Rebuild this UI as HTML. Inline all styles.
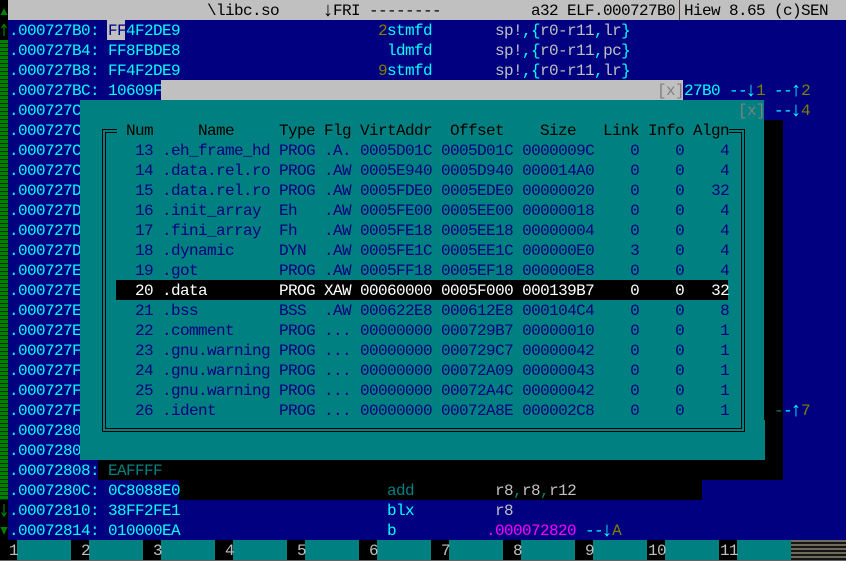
<!DOCTYPE html>
<html><head><meta charset="utf-8">
<style>
html,body{margin:0;padding:0;background:#000080;width:846px;height:561px;overflow:hidden}
#s{position:relative;width:846px;height:561px;overflow:hidden;background:#000080;font-family:"Liberation Mono",monospace;font-size:16px;letter-spacing:-.6px;color:#0ff}
.r{position:absolute}
pre{position:absolute;margin:0 0 0 1px;font:inherit;letter-spacing:inherit;line-height:22px;height:20px;white-space:pre}
.g{color:#c0c0c0}.o{color:#808000}.k{color:#000}.n{color:#000080}.t{color:#008080}.w{color:#fff}.m{color:#f0f}.d{color:#808080}
.a{font-size:20px;letter-spacing:-3px;line-height:0;position:relative;left:-2px;top:1px}
</style></head><body><div id="s">
<div class="r" style="left:0;top:0;width:8px;height:540px;background:#000"></div>
<div class="r" style="left:0;top:40px;width:8px;height:460px;background:repeating-linear-gradient(#008000 0 3px,#003000 3px 4px)"></div>
<svg class="r" style="left:0;top:0" width="8" height="40"><path d="M4 8L7.5 15H.5Z" fill="#008000"/><path d="M4 24V36M1.5 28L4 24.500L6.500 28" fill="none" stroke="#008000" stroke-width="1.200"/></svg>
<svg class="r" style="left:0;top:500px" width="8" height="40"><path d="M4 4V16M1.500 12.500L4 16L6.500 12.500" fill="none" stroke="#008000" stroke-width="1.200"/><path d="M.5 27H7.500L4 35Z" fill="#008000"/></svg>
<div class="r" style="left:8px;top:0;width:838px;height:20px;background:#c0c0c0"></div>
<div class="r" style="left:679px;top:0;width:1px;height:20px;background:#503030"></div>
<pre class="k" style="left:206px;top:0">\libc.so</pre>
<pre class="k" style="left:323px;top:0"><span class="a">↓</span>FRI --------</pre>
<pre class="k" style="left:530px;top:0">a32 ELF.000727B0</pre>
<pre class="k" style="left:683px;top:0">Hiew 8.65 (c)SEN</pre>

<div class="r" style="left:107px;top:20px;width:18px;height:20px;background:#c0c0c0"></div>
<pre style="left:8px;top:20px">.000727B0: <span class="n">FF</span>4F2DE9</pre>
<pre style="left:8px;top:40px">.000727B4: FF8FBDE8</pre>
<pre style="left:8px;top:60px">.000727B8: FF4F2DE9</pre>
<pre style="left:377px;top:20px"><span class="o">2</span>stmfd</pre>
<pre style="left:386px;top:40px">ldmfd</pre>
<pre style="left:377px;top:60px"><span class="o">9</span>stmfd</pre>
<pre style="left:494px;top:20px"><span class="g">sp!</span>,{<span class="g">r0-r11</span>,<span class="g">lr</span>}</pre>
<pre style="left:494px;top:40px"><span class="g">sp!</span>,{<span class="g">r0-r11</span>,<span class="g">pc</span>}</pre>
<pre style="left:494px;top:60px"><span class="g">sp!</span>,{<span class="g">r0-r11</span>,<span class="g">lr</span>}</pre>

<pre style="left:8px;top:80px">.000727BC: 10609F</pre>
<pre style="left:8px;top:100px">.000727C</pre>
<pre style="left:8px;top:120px">.000727C</pre>
<pre style="left:8px;top:140px">.000727C</pre>
<pre style="left:8px;top:160px">.000727C</pre>
<pre style="left:8px;top:180px">.000727D</pre>
<pre style="left:8px;top:200px">.000727D</pre>
<pre style="left:8px;top:220px">.000727D</pre>
<pre style="left:8px;top:240px">.000727D</pre>
<pre style="left:8px;top:260px">.000727E</pre>
<pre style="left:8px;top:280px">.000727E</pre>
<pre style="left:8px;top:300px">.000727E</pre>
<pre style="left:8px;top:320px">.000727E</pre>
<pre style="left:8px;top:340px">.000727F</pre>
<pre style="left:8px;top:360px">.000727F</pre>
<pre style="left:8px;top:380px">.000727F</pre>
<pre style="left:8px;top:400px">.000727F</pre>
<pre style="left:8px;top:420px">.0007280</pre>
<pre style="left:8px;top:440px">.0007280</pre>

<div class="r" style="left:161px;top:80px;width:522px;height:20px;background:#c0c0c0"></div>
<pre class="d" style="left:656px;top:80px">[x]</pre>
<pre style="left:683px;top:80px">27B0 --<span class="a">↓</span><span class="o">1</span> --<span class="a">↑</span><span class="o">2</span></pre>
<pre style="left:773px;top:100px">--<span class="a">↓</span><span class="o">4</span></pre>

<div class="r" style="left:764px;top:120px;width:19px;height:360px;background:#000"></div>
<div class="r" style="left:98px;top:460px;width:685px;height:20px;background:#000"></div>
<div class="r" style="left:179px;top:480px;width:523px;height:20px;background:#000"></div>
<div class="r" style="left:80px;top:100px;width:684px;height:320px;background:#008080"></div>
<div class="r" style="left:80px;top:420px;width:685px;height:40px;background:#008080"></div>
<pre class="d" style="left:737px;top:100px">[x]</pre>
<pre style="left:773px;top:400px"><span class="t">-</span>-<span class="a">↑</span><span class="o">7</span></pre>

<div class="r" style="left:102px;top:129px;width:15px;height:1px;background:#000"></div>
<div class="r" style="left:105px;top:132px;width:12px;height:1px;background:#000"></div>
<div class="r" style="left:729px;top:129px;width:16px;height:1px;background:#000"></div>
<div class="r" style="left:729px;top:132px;width:13px;height:1px;background:#000"></div>
<div class="r" style="left:102px;top:129px;width:1px;height:303px;background:#000"></div>
<div class="r" style="left:105px;top:132px;width:1px;height:297px;background:#000"></div>
<div class="r" style="left:744px;top:129px;width:1px;height:303px;background:#000"></div>
<div class="r" style="left:741px;top:132px;width:1px;height:297px;background:#000"></div>
<div class="r" style="left:102px;top:431px;width:643px;height:1px;background:#000"></div>
<div class="r" style="left:105px;top:428px;width:637px;height:1px;background:#000"></div>

<pre class="k" style="left:125px;top:120px">Num</pre>
<pre class="k" style="left:197px;top:120px">Name</pre>
<pre class="k" style="left:278px;top:120px">Type</pre>
<pre class="k" style="left:323px;top:120px">Flg</pre>
<pre class="k" style="left:359px;top:120px">VirtAddr</pre>
<pre class="k" style="left:449px;top:120px">Offset</pre>
<pre class="k" style="left:539px;top:120px">Size</pre>
<pre class="k" style="left:602px;top:120px">Link</pre>
<pre class="k" style="left:647px;top:120px">Info</pre>
<pre class="k" style="left:692px;top:120px">Algn</pre>

<div class="r" style="left:116px;top:280px;width:612px;height:20px;background:#000"></div>
<pre class="n" style="left:134px;top:140px">13 .eh_frame_hd PROG .A. 0005D01C 0005D01C 0000009C    0    0    4</pre>
<pre class="n" style="left:134px;top:160px">14 .data.rel.ro PROG .AW 0005E940 0005D940 000014A0    0    0    4</pre>
<pre class="n" style="left:134px;top:180px">15 .data.rel.ro PROG .AW 0005FDE0 0005EDE0 00000020    0    0   32</pre>
<pre class="n" style="left:134px;top:200px">16 .init_array  Eh   .AW 0005FE00 0005EE00 00000018    0    0    4</pre>
<pre class="n" style="left:134px;top:220px">17 .fini_array  Fh   .AW 0005FE18 0005EE18 00000004    0    0    4</pre>
<pre class="n" style="left:134px;top:240px">18 .dynamic     DYN  .AW 0005FE1C 0005EE1C 000000E0    3    0    4</pre>
<pre class="n" style="left:134px;top:260px">19 .got         PROG .AW 0005FF18 0005EF18 000000E8    0    0    4</pre>
<pre class="w" style="left:134px;top:280px">20 .data        PROG XAW 00060000 0005F000 000139B7    0    0   32</pre>
<pre class="n" style="left:134px;top:300px">21 .bss         BSS  .AW 000622E8 000612E8 000104C4    0    0    8</pre>
<pre class="n" style="left:134px;top:320px">22 .comment     PROG ... 00000000 000729B7 00000010    0    0    1</pre>
<pre class="n" style="left:134px;top:340px">23 .gnu.warning PROG ... 00000000 000729C7 00000042    0    0    1</pre>
<pre class="n" style="left:134px;top:360px">24 .gnu.warning PROG ... 00000000 00072A09 00000043    0    0    1</pre>
<pre class="n" style="left:134px;top:380px">25 .gnu.warning PROG ... 00000000 00072A4C 00000042    0    0    1</pre>
<pre class="n" style="left:134px;top:400px">26 .ident       PROG ... 00000000 00072A8E 000002C8    0    0    1</pre>

<pre style="left:8px;top:460px">.00072808: <span class="t">EAFFFF</span></pre>
<pre style="left:8px;top:480px">.0007280C: 0C8088E0</pre>
<pre style="left:8px;top:500px">.00072810: 38FF2FE1</pre>
<pre style="left:8px;top:520px">.00072814: 010000EA</pre>
<pre class="t" style="left:386px;top:480px">add</pre>
<pre style="left:386px;top:500px">blx</pre>
<pre style="left:386px;top:520px">b</pre>
<pre style="left:494px;top:480px"><span class="g">r8</span><span class="t">,</span><span class="g">r8</span><span class="t">,</span><span class="g">r12</span></pre>
<pre class="g" style="left:494px;top:500px">r8</pre>
<pre style="left:485px;top:520px"><span class="m">.000072820</span> --<span class="a">↓</span><span class="o">A</span></pre>

<div class="r" style="left:0;top:540px;width:846px;height:20px;background:#008080"></div>
<div class="r" style="left:0;top:560px;width:846px;height:1px;background:#5c6464"></div>
<div class="r" style="left:0;top:540px;width:17px;height:20px;background:#000"></div>
<div class="r" style="left:71px;top:540px;width:18px;height:20px;background:#000"></div>
<div class="r" style="left:143px;top:540px;width:18px;height:20px;background:#000"></div>
<div class="r" style="left:215px;top:540px;width:18px;height:20px;background:#000"></div>
<div class="r" style="left:287px;top:540px;width:18px;height:20px;background:#000"></div>
<div class="r" style="left:359px;top:540px;width:18px;height:20px;background:#000"></div>
<div class="r" style="left:431px;top:540px;width:18px;height:20px;background:#000"></div>
<div class="r" style="left:503px;top:540px;width:18px;height:20px;background:#000"></div>
<div class="r" style="left:575px;top:540px;width:18px;height:20px;background:#000"></div>
<div class="r" style="left:647px;top:540px;width:18px;height:20px;background:#000"></div>
<div class="r" style="left:719px;top:540px;width:18px;height:20px;background:#000"></div>
<div class="r" style="left:791px;top:540px;width:55px;height:20px;background:repeating-linear-gradient(#6e6a5c 0 2px,#151515 2px 4px)"></div>
<pre class="g" style="left:8px;top:540px">1</pre>
<pre class="g" style="left:80px;top:540px">2</pre>
<pre class="g" style="left:152px;top:540px">3</pre>
<pre class="g" style="left:224px;top:540px">4</pre>
<pre class="g" style="left:296px;top:540px">5</pre>
<pre class="g" style="left:368px;top:540px">6</pre>
<pre class="g" style="left:440px;top:540px">7</pre>
<pre class="g" style="left:512px;top:540px">8</pre>
<pre class="g" style="left:584px;top:540px">9</pre>
<pre class="g" style="left:647px;top:540px">10</pre>
<pre class="g" style="left:719px;top:540px">11</pre>
</div></body></html>
